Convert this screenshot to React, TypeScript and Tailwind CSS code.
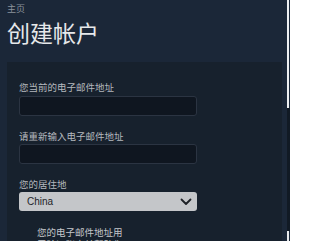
import React from "react";

export default function App() {
  const cjk = { fontFamily: '"Noto Sans CJK SC", "Noto Sans", sans-serif' };
  return (
    <div className="w-[290px] h-[241px] overflow-hidden bg-[#1b2738] flex" style={cjk}>
      <div className="w-[287px] shrink-0 pl-[7px] pt-[3px] flex flex-col">
        <div className="text-[9px] leading-[12px] text-[#8a939c]">主页</div>
        <div className="mt-[3px] text-[23px] leading-[28px] text-[#e6e8ea]">创建帐户</div>
        <div className="mt-[16px] w-[275px] flex-1 bg-[#17212d] pl-[12px] pt-[19px]">
          <div className="text-[9.5px] leading-[12px] text-[#b4b8bd]">您当前的电子邮件地址</div>
          <div className="mt-[3px] w-[178px] h-[20px] bg-[#0f1620] border border-[#2b3442] rounded-[3px]" />
          <div className="mt-[14px] text-[9.5px] leading-[12px] text-[#b4b8bd]">请重新输入电子邮件地址</div>
          <div className="mt-[2px] w-[178px] h-[20px] bg-[#0f1620] border border-[#2b3442] rounded-[3px]" />
          <div className="mt-[14px] text-[9.5px] leading-[12px] text-[#b4b8bd]">您的居住地</div>
          <div className="mt-[2px] w-[178px] h-[19px] bg-[#c4c6c9] rounded-[3px] flex items-center justify-between pl-[8px] pr-[5px]">
            <span className="text-[10px] text-[#222428]" style={{ fontFamily: '"Liberation Sans", Arial, sans-serif' }}>China</span>
            <svg width="12" height="8" viewBox="0 0 12 8">
              <path d="M1.5 1.5 L6 6 L10.5 1.5" fill="none" stroke="#1e2126" strokeWidth="1.8" strokeLinecap="round" strokeLinejoin="round" />
            </svg>
          </div>
          <div className="mt-[15px] pl-[18px] text-[9.5px] leading-[12px] text-[#c4c7cb]">
            <div>您的电子邮件地址用</div>
            <div>于验证账户并帮助您</div>
          </div>
        </div>
      </div>
      <div className="w-[3px] shrink-0 flex flex-col">
        <div className="h-[108px] bg-[#eef0f2] w-[1.5px]" />
        <div className="flex-1 bg-[#111a25]" />
        <div className="h-[10px] bg-[#e8eaec] w-[1.5px]" />
      </div>
    </div>
  );
}
